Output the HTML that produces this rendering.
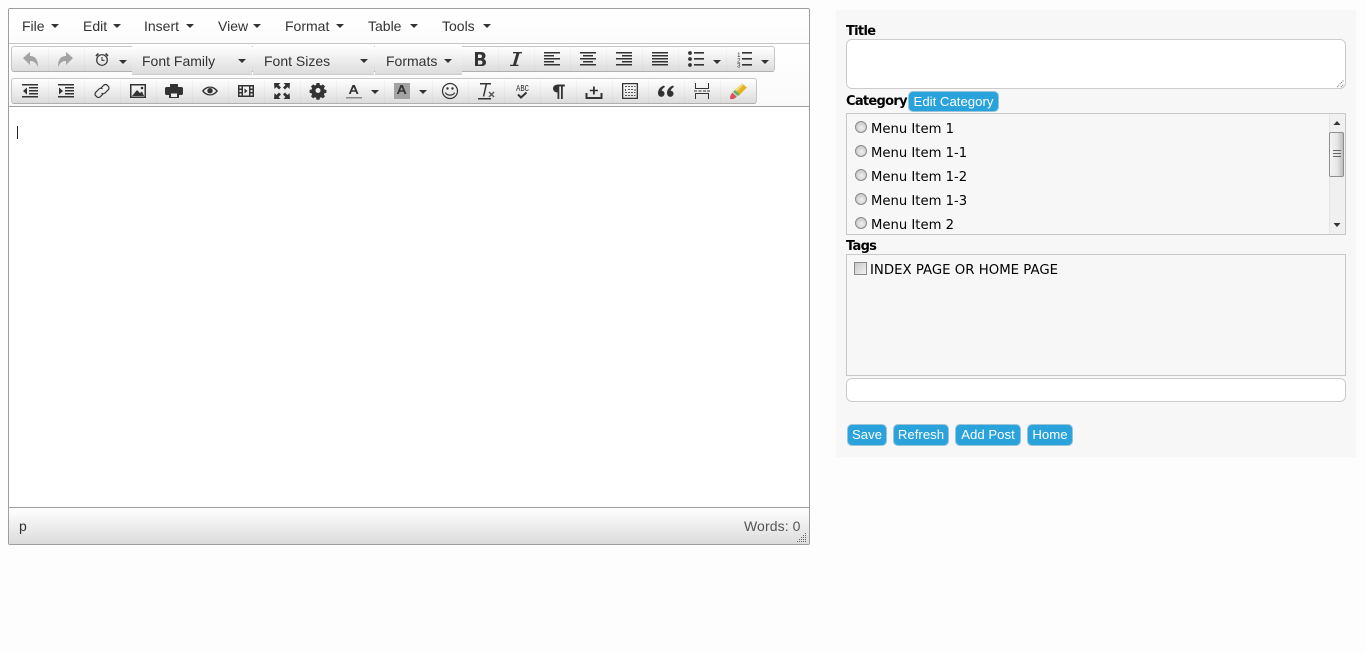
<!DOCTYPE html>
<html><head><meta charset="utf-8"><title>Editor</title>
<style>
*{box-sizing:border-box}
html,body{margin:0;padding:0;width:1366px;height:652px;overflow:hidden;background:#fdfdfd}
body{font-family:"Liberation Sans",sans-serif;position:relative}
.a{position:absolute}
.t{position:absolute;white-space:nowrap;font-size:14px;line-height:16px;color:#333}
.car{position:absolute;width:0;height:0;border-left:4px solid transparent;border-right:4px solid transparent;border-top:4px solid #333}
.grp{position:absolute;background:linear-gradient(#fff,#dcdcdc);border:1px solid #c6c6c6;border-bottom-color:#b0b0b0;border-radius:3px}
.sep{position:absolute;width:1px;background:rgba(0,0,0,.022)}
.lb{position:absolute;top:46px;height:29px;background:linear-gradient(#fff,#dcdcdc);border-bottom:1px solid #cdcdcd}
.lab{position:absolute;font-family:"DejaVu Sans",sans-serif;font-weight:bold;font-size:13px;line-height:16px;color:#000;letter-spacing:-.7px;white-space:nowrap}
.itm{position:absolute;font-family:"DejaVu Sans",sans-serif;font-size:13.2px;line-height:16px;color:#000;white-space:nowrap}
.box{position:absolute;background:#f7f7f7;border:1px solid #c8c8c8}
.inp{position:absolute;background:#fff;border:1px solid #ccc}
.btn{position:absolute;background:#2aa3dd;border:1px solid #9cc4d8;border-radius:5px;color:#fff;font-size:13.2px;line-height:20px;text-align:center;white-space:nowrap}
.rad{position:absolute;left:855px;width:12px;height:12px;border-radius:50%;border:1px solid #8a8a8a;background:radial-gradient(circle at 55% 60%,#f0f0f0,#bdbdbd)}
</style></head><body>

<!-- Editor -->
<div class="a" style="left:8px;top:8px;width:802px;height:537px;border:1px solid #9e9e9e;border-radius:2px;background:#fff"></div>
<div class="a" style="left:9px;top:9px;width:800px;height:35px;background:linear-gradient(#fff,#fcfcfc);border-bottom:1px solid #c5c5c5"></div>
<div class="a" style="left:9px;top:44px;width:800px;height:63px;background:linear-gradient(#fff,#fafafa);border-bottom:1px solid #9e9e9e"></div>

<div class="t" style="left:22px;top:18px">File</div><div class="car" style="left:51px;top:24px"></div>
<div class="t" style="left:83px;top:18px">Edit</div><div class="car" style="left:113px;top:24px"></div>
<div class="t" style="left:144px;top:18px">Insert</div><div class="car" style="left:186px;top:24px"></div>
<div class="t" style="left:218px;top:18px">View</div><div class="car" style="left:253px;top:24px"></div>
<div class="t" style="left:285px;top:18px">Format</div><div class="car" style="left:336px;top:24px"></div>
<div class="t" style="left:368px;top:18px">Table</div><div class="car" style="left:410px;top:24px"></div>
<div class="t" style="left:442px;top:18px">Tools</div><div class="car" style="left:483px;top:24px"></div>

<div class="grp" style="left:11px;top:46px;width:764px;height:26px"></div>
<div class="grp" style="left:11px;top:78px;width:746px;height:26px"></div>

<div class="lb" style="left:132px;width:120px"></div>
<div class="lb" style="left:253px;width:121px"></div>
<div class="lb" style="left:375px;width:87px"></div>
<div class="t" style="left:142px;top:53px">Font Family</div><div class="car" style="left:238px;top:59px"></div>
<div class="t" style="left:264px;top:53px">Font Sizes</div><div class="car" style="left:360px;top:59px"></div>
<div class="t" style="left:386px;top:53px">Formats</div><div class="car" style="left:444px;top:59px"></div>

<div class="sep" style="left:48px;top:47px;height:24px"></div><div class="sep" style="left:84px;top:47px;height:24px"></div>
<div class="sep" style="left:498px;top:47px;height:24px"></div><div class="sep" style="left:534px;top:47px;height:24px"></div><div class="sep" style="left:570px;top:47px;height:24px"></div><div class="sep" style="left:606px;top:47px;height:24px"></div><div class="sep" style="left:642px;top:47px;height:24px"></div><div class="sep" style="left:678px;top:47px;height:24px"></div><div class="sep" style="left:726px;top:47px;height:24px"></div>
<div class="sep" style="left:48px;top:79px;height:24px"></div><div class="sep" style="left:84px;top:79px;height:24px"></div><div class="sep" style="left:120px;top:79px;height:24px"></div><div class="sep" style="left:156px;top:79px;height:24px"></div><div class="sep" style="left:192px;top:79px;height:24px"></div><div class="sep" style="left:228px;top:79px;height:24px"></div><div class="sep" style="left:264px;top:79px;height:24px"></div><div class="sep" style="left:300px;top:79px;height:24px"></div><div class="sep" style="left:336px;top:79px;height:24px"></div><div class="sep" style="left:384px;top:79px;height:24px"></div><div class="sep" style="left:432px;top:79px;height:24px"></div><div class="sep" style="left:468px;top:79px;height:24px"></div><div class="sep" style="left:504px;top:79px;height:24px"></div><div class="sep" style="left:540px;top:79px;height:24px"></div><div class="sep" style="left:576px;top:79px;height:24px"></div><div class="sep" style="left:612px;top:79px;height:24px"></div><div class="sep" style="left:648px;top:79px;height:24px"></div><div class="sep" style="left:684px;top:79px;height:24px"></div><div class="sep" style="left:720px;top:79px;height:24px"></div>

<svg class="a" style="left:0;top:0" width="810" height="110" viewBox="0 0 810 110">
<g fill="#333">
<!-- undo/redo -->
<path fill="#a3a3a3" d="M23 58l7-6v4c5 0 8 3 8 11-2-4-4-6-8-6v4z"/>
<path fill="#a3a3a3" d="M73 58l-7-6v4c-5 0-8 3-8 11 2-4 4-6 8-6v4z"/>
<!-- clock -->
<g fill="none" stroke="#333"><circle cx="102" cy="60" r="5.300" stroke-width="1.200"/><path d="M102 57v3.400h2.500" stroke-width="1"/><path d="M96 56l2.400-2.400M108 56l-2.400-2.400" stroke-width="1.600"/></g>
<path d="M119 60h8l-4 4z"/>
<!-- B I -->
<path fill-rule="evenodd" d="M475 52h6c3 0 4.500 1.700 4.500 3.800 0 1.700-.8 2.800-2 3.200 1.600.4 2.500 1.700 2.500 3.500 0 2.400-1.800 3.500-4.500 3.500h-6.500zM478 54.500v3.500h2.300c1 0 1.700-.6 1.700-1.700s-.7-1.800-1.700-1.800zM478 60.500v4h2.500c1.200 0 2-.7 2-2s-.8-2-2-2z"/>
<path d="M513 52h9v1.400h-2.600l-3.400 11.300h2.500v1.300h-8.500v-1.300h3l3.400-11.300H513z"/>
<!-- aligns -->
<path d="M544 52h16v1.500h-16zM544 55h10v1.500h-10zM544 58h16v1.500h-16zM544 61h10v1.500h-10zM544 64h16v1.500h-16z"/>
<path d="M580 52h16v1.500h-16zM583 55h10v1.500h-10zM580 58h16v1.500h-16zM583 61h10v1.500h-10zM580 64h16v1.500h-16z"/>
<path d="M616 52h16v1.500h-16zM622 55h10v1.500h-10zM616 58h16v1.500h-16zM622 61h10v1.500h-10zM616 64h16v1.500h-16z"/>
<path d="M652 52h16v1.500h-16zM652 55h16v1.500h-16zM652 58h16v1.500h-16zM652 61h16v1.500h-16zM652 64h16v1.500h-16z"/>
<!-- bullets -->
<circle cx="690" cy="53" r="1.900"/><circle cx="690" cy="59" r="1.900"/><circle cx="690" cy="65" r="1.900"/>
<path d="M694 52h10v1.600h-10zM694 58h10v1.600h-10zM694 64h10v1.600h-10z"/>
<path d="M713 60h8l-4 4z"/>
<path d="M742 52h10v1.600h-10zM742 58h10v1.600h-10zM742 64h10v1.600h-10z"/>
<path d="M761 60h8l-4 4z"/>
<!-- row 2 -->
<path d="M22 84h16v1.500h-16zM29 87h9v1.500h-9zM29 90h9v1.500h-9zM29 93h9v1.500h-9zM22 96h16v1.500h-16zM27 87.500v7l-4-3.500z"/>
<path d="M58 84h16v1.500h-16zM65 87h9v1.500h-9zM65 90h9v1.500h-9zM65 93h9v1.500h-9zM58 96h16v1.500h-16zM59 87.500v7l4-3.500z"/>
<g fill="none" stroke="#333" stroke-width="1.200"><path d="M101 88l2.500-2.500a2.500 2.500 0 0 1 4 0l.5.500a2.500 2.500 0 0 1 0 4l-3 3a2.500 2.500 0 0 1-3.500 0"/><path d="M103 94l-2.500 2.500a2.500 2.500 0 0 1-4 0l-.5-.5a2.500 2.500 0 0 1 0-4l3-3a2.500 2.500 0 0 1 3.500 0"/></g>
<path fill-rule="evenodd" d="M130 84h16v14h-16zM131.500 85.500v11h13v-11z"/><path d="M132 96l5-6 3 3 2-1.500 2 4.500z"/><circle cx="142" cy="88" r="1.300"/>
<path d="M170 84h8v3h3.500c.8 0 1.500.7 1.500 1.500v5c0 .8-.7 1.500-1.500 1.500h-2.500v3h-10v-3h-2.500c-.8 0-1.500-.7-1.500-1.500v-5c0-.8.7-1.500 1.500-1.500h3.500z"/><path fill="#f0f0f0" d="M171 93.500h6v3.500h-6z"/>
<path fill-rule="evenodd" d="M202 91c2-3 5-4.500 8-4.500s6 1.500 8 4.500c-2 3-5 4.500-8 4.500s-6-1.500-8-4.500zM203.800 91c1.700 2 3.900 3.300 6.200 3.300s4.500-1.300 6.200-3.300c-1.700-2-3.900-3.300-6.200-3.300s-4.500 1.300-6.200 3.300z"/><circle cx="210" cy="90.700" r="2.700"/>
<path fill-rule="evenodd" d="M238 85h16v12h-16zM239.500 86.500v2h2v-2zM239.500 90v2h2v-2zM239.500 93.500v2h2v-2zM250.500 86.500v2h2v-2zM250.500 90v2h2v-2zM250.500 93.500v2h2v-2zM243 86.500v9h6v-9z"/><path d="M244.500 88.500l3 2.500-3 2.500z"/>
<!-- fullscreen -->
<path d="M274 83h6.500l-2 2 2.500 2.500-2 2-2.500-2.500-2 2zM290 83h-6.500l2 2-2.500 2.500 2 2 2.500-2.500 2 2zM274 99h6.500l-2-2 2.500-2.500-2-2-2.500 2.500-2-2zM290 99h-6.500l2-2-2.500-2.500 2-2 2.500 2.500 2-2z"/>
<path fill-rule="evenodd" d="M316.500 83.500h3l.4 2 1.300.5 1.700-1.100 2.100 2.100-1.100 1.700.5 1.300 2 .4v3l-2 .4-.5 1.300 1.100 1.700-2.100 2.100-1.700-1.100-1.300.5-.4 2h-3l-.4-2-1.300-.5-1.700 1.100-2.100-2.100 1.100-1.700-.5-1.300-2-.4v-3l2-.4.5-1.300-1.100-1.700 2.100-2.100 1.700 1.100 1.300-.5zM318 88.500a2.500 2.500 0 1 0 0 5 2.500 2.500 0 0 0 0-5z" transform="translate(0 -.5)"/>
<path fill-rule="evenodd" d="M352.500 85h2.300l3.700 9h-2l-.8-2.200h-4.100l-.8 2.200h-2zM353.600 87.300l-1.400 3h2.800z"/><path fill="#8a8a8a" d="M346 97h16v1.500h-16z"/>
<path d="M371 90h8l-4 4z"/>
<path fill="#a3a3a3" d="M394 83h16v16h-16z"/><path fill-rule="evenodd" d="M400.500 85h2.300l3.700 9h-2l-.8-2.200h-4.100l-.8 2.200h-2zM401.600 87.300l-1.400 3h2.800z"/>
<path d="M419 90h8l-4 4z"/>
<g fill="none" stroke="#333" stroke-width="1.200"><circle cx="450" cy="91" r="7.500"/><path d="M445.500 92.500c1 3.500 8 3.500 9 0"/></g><circle cx="447.500" cy="88.500" r="1.200"/><circle cx="452.500" cy="88.500" r="1.200"/>
<path d="M480 83h11v1.500h-4l-2.700 12h-1.500l2.700-12h-5.500zM478 98h13v1.500h-13z"/><path fill="#555" d="M489 92.500l1-1 2 2 2-2 1 1-2 2 2 2-1 1-2-2-2 2-1-1 2-2z" transform="translate(-.5 0)"/>
<!-- spellcheck -->
<path fill="none" stroke="#333" stroke-width="2" d="M518 94.500l3 3 5.500-5"/>
<path d="M558 84.500c-3 0-5 1.800-5 4s2 4 4.500 4v6.500h1.800V86.500h1.700V99h1.800V86.500h2v-2z"/>
<path d="M593.500 86.500h1.800v3.200h3.200v1.600h-3.200v3.200h-1.800v-3.200h-3.200v-1.600h3.200zM586 93h2v4h13v-4h2v6h-17z" transform="translate(-.5 0)"/>
<path fill-rule="evenodd" d="M622 83h16v16h-16zM623.300 84.300v13.400h13.400V84.300z"/><path fill="#555" d="M625 86h2v1h-2zM628 86h2v1h-2zM631 86h2v1h-2zM634 86h1.500v1H634zM625 89h1v2h-1zM634.500 89h1v2h-1zM625 92h2v1h-2zM628 92h2v1h-2zM631 92h2v1h-2zM634 92h1.500v1H634zM625 95h2v1h-2zM628 95h2v1h-2zM631 95h2v1h-2zM634 95h1.500v1H634zM628 89h2v1h-2zM631 89h2v1h-2z"/>
<path d="M664 85.500c-3 1-6 3.500-6 7.500 0 2.200 1.300 3.800 3.300 3.800 1.800 0 3.200-1.400 3.200-3.200 0-1.700-1.200-2.800-2.800-2.900.4-1.500 1.500-2.800 3.300-3.700zM673 85.500c-3 1-6 3.500-6 7.500 0 2.200 1.300 3.800 3.300 3.800 1.800 0 3.200-1.400 3.200-3.200 0-1.700-1.200-2.800-2.800-2.900.4-1.500 1.500-2.800 3.300-3.700z"/>
<path d="M695 83h1v5h12v-5h1v6h-14zM695 99h1v-5h12v5h1v-6h-14zM694 90.500h3v1h-3zM698.500 90.500h3v1h-3zM703 90.500h3v1h-3zM707 90.500h3v1h-3z"/>
</g>
<text x="516" y="91" font-family="Liberation Mono" font-size="9" fill="#333" textLength="13" lengthAdjust="spacingAndGlyphs">ABC</text>
<text x="740.500" y="57" font-family="Liberation Sans" font-size="6" fill="#333" text-anchor="end">1</text>
<text x="740.500" y="62.500" font-family="Liberation Sans" font-size="6" fill="#333" text-anchor="end">2</text>
<text x="740.500" y="67.500" font-family="Liberation Sans" font-size="6" fill="#333" text-anchor="end">3</text>
<!-- eraser/pencil -->
<path fill="#e2b325" d="M742 83.500l5 4-8.500 8.500-5-4.500z"/>
<path fill="#f3dc7a" d="M742 83.500l1.500 1.200-8.500 8.500-1.500-1.300z"/>
<path fill="#5fae6a" d="M735 90l4.500 4-1.800 1.700-4.500-4z"/>
<path fill="#bfc7c9" d="M733.200 91.700l4.500 4-1 1-4.500-4z"/>
<path fill="#d9534f" d="M732.200 92.700l4.500 4-2.200 1.800c-1.500 1-3.500.8-4.500.3 0-1.500 .3-3.400 1.200-4.600z"/>
</svg>

<!-- caret -->
<div class="a" style="left:17px;top:126px;width:1px;height:13px;background:#222"></div>

<!-- status -->
<div class="a" style="left:9px;top:507px;width:800px;height:37px;background:linear-gradient(#fff,#dcdcdc);border-top:1px solid #9e9e9e"></div>
<div class="t" style="left:19px;top:518px">p</div>
<div class="t" style="left:744px;top:518px;color:#555;letter-spacing:.1px">Words: 0</div>
<svg class="a" style="left:796px;top:532px" width="12" height="11" fill="#666"><path d="M9 1h1v1H9zM7 3h1v1H7zM9 3h1v1H9zM5 5h1v1H5zM7 5h1v1H7zM9 5h1v1H9zM3 7h1v1H3zM5 7h1v1H5zM7 7h1v1H7zM9 7h1v1H9zM1 9h1v1H1zM3 9h1v1H3zM5 9h1v1H5zM7 9h1v1H7zM9 9h1v1H9z"/></svg>

<!-- Right panel -->
<div class="a" style="left:836px;top:10px;width:520px;height:447px;background:#f7f7f7"></div>
<div class="lab" style="left:846px;top:24px">Title</div>
<div class="inp" style="left:846px;top:39px;width:500px;height:50px;border-radius:6px"></div>
<svg class="a" style="left:1336px;top:79px" width="9" height="9" stroke="#777" fill="none"><path d="M1 8L8 1M5 8L8 5" stroke-dasharray="1 1"/></svg>
<div class="lab" style="left:846px;top:94px">Category</div>
<div class="btn" style="left:908px;top:91px;width:91px;height:21px">Edit Category</div>

<div class="box" style="left:846px;top:113px;width:500px;height:122px"></div>
<div class="rad" style="top:121px"></div><div class="itm" style="left:871px;top:122px">Menu Item 1</div>
<div class="rad" style="top:145px"></div><div class="itm" style="left:871px;top:146px">Menu Item 1-1</div>
<div class="rad" style="top:169px"></div><div class="itm" style="left:871px;top:170px">Menu Item 1-2</div>
<div class="rad" style="top:193px"></div><div class="itm" style="left:871px;top:194px">Menu Item 1-3</div>
<div class="rad" style="top:217px"></div><div class="itm" style="left:871px;top:218px">Menu Item 2</div>

<div class="a" style="left:1329px;top:114px;width:16px;height:120px;background:#f0f0f0;border-left:1px solid #e4e4e4"></div>
<div class="a" style="left:1329px;top:132px;width:15px;height:45px;border:1px solid #8f8f8f;border-radius:2px;background:linear-gradient(90deg,#f4f4f4,#e6e6e6 55%,#bdbdbd)"></div>
<svg class="a" style="left:1329px;top:114px" width="16" height="120" fill="#333"><path d="M4.500 11l3.500-4 3.500 4z"/><path d="M4.500 109l3.500 4 3.500-4z"/><path fill="#666" d="M4 36h8v1H4zM4 39h8v1H4zM4 42h8v1H4z"/></svg>

<div class="lab" style="left:846px;top:239px">Tags</div>
<div class="box" style="left:846px;top:254px;width:500px;height:122px"></div>
<div class="a" style="left:854px;top:262px;width:13px;height:13px;border:1px solid #8a8a8a;background:linear-gradient(135deg,#c8c8c8,#f2f2f2)"></div>
<div class="itm" style="left:870px;top:263px;font-size:13.3px">INDEX PAGE OR HOME PAGE</div>
<div class="inp" style="left:846px;top:378px;width:500px;height:24px;border-radius:6px"></div>

<div class="btn" style="left:847px;top:424px;width:40px;height:22px">Save</div>
<div class="btn" style="left:893px;top:424px;width:56px;height:22px">Refresh</div>
<div class="btn" style="left:955px;top:424px;width:66px;height:22px">Add Post</div>
<div class="btn" style="left:1027px;top:424px;width:46px;height:22px">Home</div>
</body></html>
